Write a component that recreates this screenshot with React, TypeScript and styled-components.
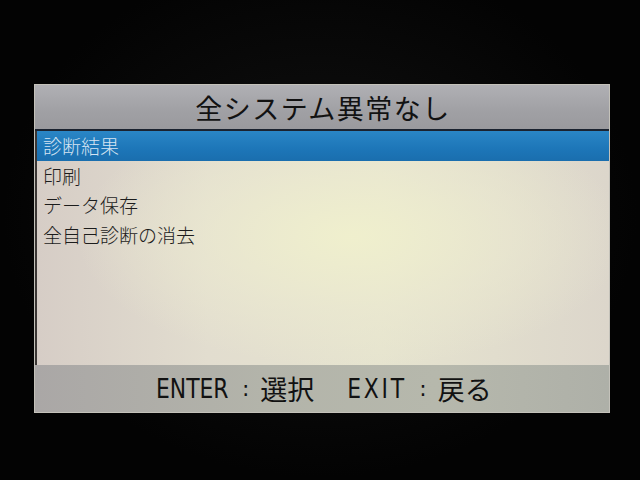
import styled, { createGlobalStyle } from "styled-components"

const GlobalStyle = createGlobalStyle`
  html, body {
    margin: 0;
    padding: 0;
    background: #040404;
  }
  #root {
    width: 640px;
    height: 480px;
    overflow: hidden;
  }
`

const items = ["診断結果", "印刷", "データ保存", "全自己診断の消去"]

const Stage = styled.div`
  width: 640px;
  height: 480px;
  box-sizing: border-box;
  padding: 84px 30px 0 34px;
  background: radial-gradient(ellipse at 50% 45%, #121212 0%, #030303 70%);
  font-family: "Noto Sans CJK JP", "Noto Sans", sans-serif;
`

const Screen = styled.div`
  width: 576px;
  height: 329px;
  box-sizing: border-box;
  border: 1px solid #c4c2ba;
  display: flex;
  flex-direction: column;
  overflow: hidden;
`

const Header = styled.div`
  height: 44px;
  flex: none;
  display: flex;
  align-items: center;
  justify-content: center;
  background: linear-gradient(180deg, #b0b0b4 0%, #a0a0a4 60%, #9a9a9e 100%);
  border-bottom: 2px solid #1b2330;
  color: #121212;
  font-size: 27px;
  letter-spacing: 1.5px;
  padding-left: 2px;
`

const List = styled.div`
  flex: 1;
  display: flex;
  flex-direction: column;
  border-left: 2px solid #3a3634;
  background:
    radial-gradient(ellipse 60% 70% at 55% 45%, rgba(240, 240, 205, 0.95) 0%, rgba(236, 234, 208, 0.6) 45%, rgba(236, 234, 208, 0) 80%),
    linear-gradient(90deg, #d6cdc6 0%, #e2ddcf 30%, #e6e4cf 60%, #dcd6cb 100%);
`

const Row = styled.div<{ $active?: boolean }>`
  height: 29.5px;
  flex: none;
  display: flex;
  align-items: center;
  padding-left: 6px;
  font-size: 19px;
  font-weight: 300;
  color: ${(p) => (p.$active ? "#d6e4f2" : "#1c1c1c")};
  background: ${(p) =>
    p.$active ? "linear-gradient(180deg, #2a86c6 0%, #1d76b8 60%, #1a6eae 100%)" : "transparent"};
`

const Footer = styled.div`
  height: 47px;
  flex: none;
  display: flex;
  align-items: center;
  justify-content: center;
  background: linear-gradient(90deg, #aaa7a6 0%, #b3b4aa 40%, #b6b8ac 70%, #aeb0a8 100%);
  color: #121212;
  font-size: 27px;
  font-weight: 400;
`

const Key = styled.span<{ $spacing?: number }>`
  font-family: "DejaVu Sans Condensed", "DejaVu Sans", sans-serif;
  font-size: 27px;
  letter-spacing: ${(p) => p.$spacing ?? 0}px;
  display: inline-block;
  transform: scaleX(0.9);
`

const Colon = styled.span`
  font-family: "DejaVu Sans", sans-serif;
  font-size: 22px;
  margin: 0 11px 0 9px;
`

const Action = styled.span`
  margin-right: 30px;
  &:last-child {
    margin-right: 0;
  }
`

export default function App() {
  return (
    <>
      <GlobalStyle />
      <Stage>
        <Screen>
          <Header>全システム異常なし</Header>
          <List>
            {items.map((item, i) => (
              <Row key={item} $active={i === 0}>
                {item}
              </Row>
            ))}
          </List>
          <Footer>
            <Key>ENTER</Key>
            <Colon>:</Colon>
            <Action>選択</Action>
            <Key $spacing={3}>EXIT</Key>
            <Colon>:</Colon>
            <Action>戻る</Action>
          </Footer>
        </Screen>
      </Stage>
    </>
  )
}
